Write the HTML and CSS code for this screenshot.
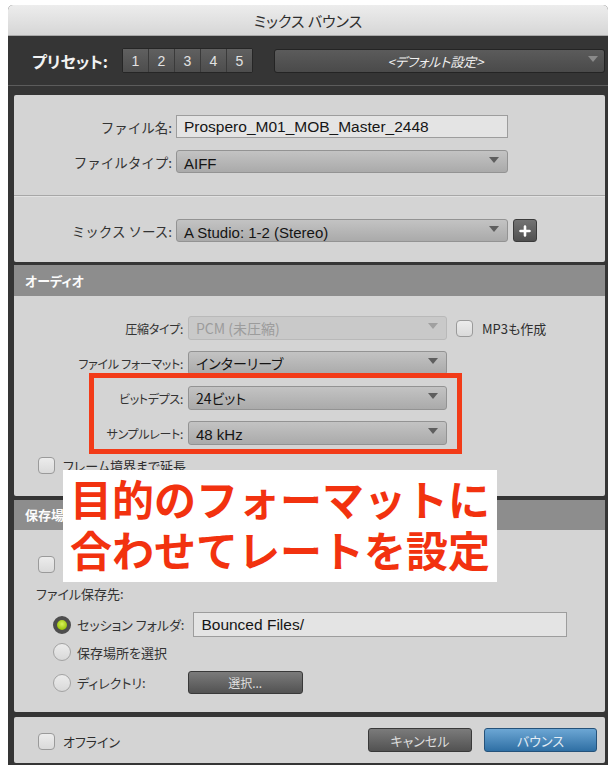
FILE: index.html
```html
<!DOCTYPE html>
<html lang="ja">
<head>
<meta charset="utf-8">
<title>ミックス バウンス</title>
<link rel="stylesheet" href="styles.css">
</head>
<body>
<div class="dialog">
  <div class="titlebar">ミックス バウンス</div>

  <div class="presets">
    <span class="presets-label">プリセット:</span>
    <div class="preset-slots">
      <span>1</span><span>2</span><span>3</span><span>4</span><span>5</span>
    </div>
    <div class="preset-select">&lt;デフォルト設定&gt;<span class="caret caret-dark"></span></div>
  </div>

  <div class="panel panel-file">
    <div class="form form-file">
      <span class="lbl">ファイル名:</span>
      <div class="field">Prospero_M01_MOB_Master_2448</div>
      <span></span>
      <span class="lbl">ファイルタイプ:</span>
      <div class="select">AIFF<span class="caret"></span></div>
      <span></span>
    </div>
    <div class="divider"></div>
    <div class="form form-file">
      <span class="lbl">ミックス ソース:</span>
      <div class="select">A Studio: 1-2 (Stereo)<span class="caret"></span></div>
      <button class="add-btn" type="button">
        <svg width="12" height="12" viewBox="0 0 12 12"><path d="M6 1.5v9M1.5 6h9" stroke="#fff" stroke-width="2.6" stroke-linecap="round"/></svg>
      </button>
    </div>
  </div>

  <section class="group group-audio">
    <div class="group-head">オーディオ</div>
    <div class="panel panel-audio">
      <div class="form form-audio">
        <span class="lbl">圧縮タイプ:</span>
        <div class="select select-off jp">PCM (未圧縮)<span class="caret"></span></div>
        <label class="check check-inline"><span class="box"></span><span class="check-text">MP3も作成</span></label>

        <span class="lbl">ファイル フォーマット:</span>
        <div class="select jp">インターリーブ<span class="caret"></span></div>
        <span></span>

        <span class="lbl">ビットデプス:</span>
        <div class="select jp">24ビット<span class="caret"></span></div>
        <span></span>

        <span class="lbl">サンプルレート:</span>
        <div class="select">48 kHz<span class="caret"></span></div>
        <span></span>
      </div>
      <label class="check check-row"><span class="box"></span><span class="check-text">フレーム境界まで延長</span></label>
    </div>
  </section>

  <section class="group group-save">
    <div class="group-head">保存場所</div>
    <div class="panel panel-save">
      <label class="check check-row check-first"><span class="box"></span><span class="check-text">バウンス後にインポート</span></label>
      <div class="dest-title">ファイル保存先:</div>
      <div class="radio-row radio-row-1">
        <span class="radio radio-on"></span>
        <span class="radio-text">セッション フォルダ:</span>
        <div class="field field-folder">Bounced Files/</div>
      </div>
      <div class="radio-row radio-row-2">
        <span class="radio"></span>
        <span class="radio-text">保存場所を選択</span>
      </div>
      <div class="radio-row radio-row-3">
        <span class="radio"></span>
        <span class="radio-text">ディレクトリ:</span>
        <button class="btn btn-choose" type="button">選択...</button>
      </div>
    </div>
  </section>

  <div class="panel panel-footer">
    <label class="check"><span class="box"></span><span class="check-text">オフライン</span></label>
    <div class="actions">
      <button class="btn btn-cancel" type="button">キャンセル</button>
      <button class="btn btn-bounce" type="button">バウンス</button>
    </div>
  </div>

  <div class="mark-box"></div>
  <div class="callout">目的のフォーマットに<br>合わせてレートを設定</div>
</div>
</body>
</html>
```

FILE: styles.css
```css
html, body {
  margin: 0;
  background: #ffffff;
}

body {
  font-family: "Noto Sans CJK JP", "Liberation Sans", sans-serif;
  font-feature-settings: "palt";
  color: #2c2c2c;
}

.dialog {
  position: relative;
  margin: 5px 0 0 8px;
  width: 600px;
  height: 760px;
  background: #353535;
  border-radius: 5px 5px 0 0;
  overflow: hidden;
}

/* title bar */
.titlebar {
  height: 31px;
  line-height: 31px;
  text-align: center;
  font-size: 15px;
  color: #2e2e2e;
  background: linear-gradient(#ededed, #d6d6d6);
  border-bottom: 1px solid #a9a9a9;
  box-sizing: border-box;
}

/* presets strip */
.presets {
  height: 50px;
  display: flex;
  align-items: center;
  padding-left: 24px;
  box-sizing: border-box;
  border-bottom: 1px solid #5c5c5c;
  margin-bottom: 9px;
}

.presets-label {
  color: #f2f2f2;
  font-weight: 700;
  font-size: 16px;
  width: 90px;
}

.preset-slots {
  display: flex;
  height: 25px;
  border: 1px solid #262626;
  border-radius: 2px;
  box-sizing: border-box;
  margin-right: 21px;
}

.preset-slots span {
  width: 25px;
  display: flex;
  align-items: center;
  justify-content: center;
  font-family: "Liberation Sans", sans-serif;
  font-size: 14px;
  color: #e2e2e2;
  background: linear-gradient(#606060, #4d4d4d);
  border-left: 1px solid #3a3a3a;
}

.preset-slots span:first-child {
  border-left: none;
}

.preset-select {
  position: relative;
  flex: 1;
  height: 24px;
  line-height: 23px;
  text-align: center;
  font-size: 13px;
  font-style: italic;
  color: #f0f0f0;
  background: linear-gradient(#5b5b5b, #4a4a4a);
  border: 1px solid #242424;
  border-radius: 3px;
  box-sizing: border-box;
  margin-right: 3px;
  padding-right: 8px;
}

/* light panels */
.panel {
  margin: 0 3px 0 6px;
  background: #d4d4d4;
  border-radius: 2px;
  box-sizing: border-box;
}

.panel-file {
  height: 167px;
  padding-top: 20px;
  margin-bottom: 3px;
}

.form {
  display: grid;
  align-items: center;
  column-gap: 4px;
  row-gap: 12px;
}

.form-file {
  grid-template-columns: 158px 332px auto;
}

.lbl {
  text-align: right;
  font-size: 13px;
  color: #333;
  white-space: nowrap;
}

.form-file .lbl {
  font-size: 13.5px;
  font-feature-settings: normal;
}

.field {
  height: 23px;
  line-height: 22px;
  padding-left: 7px;
  box-sizing: border-box;
  background: #e4e4e4;
  border: 1px solid #9d9d9d;
  font-family: "Liberation Sans", sans-serif;
  font-size: 15.5px;
  color: #161616;
}

.select {
  position: relative;
  height: 23px;
  line-height: 25px;
  padding-left: 7px;
  box-sizing: border-box;
  background: linear-gradient(#c3c3c3, #aaaaaa);
  border: 1px solid #939393;
  border-radius: 3px;
  font-family: "Liberation Sans", sans-serif;
  font-size: 15px;
  color: #141414;
  white-space: nowrap;
}

.select.jp {
  font-family: "Noto Sans CJK JP", "Liberation Sans", sans-serif;
  font-size: 14px;
  line-height: 23px;
}

.select-off {
  background: #c9c9c9;
  border-color: #b9b9b9;
  color: #9c9c9c;
}

.caret {
  position: absolute;
  right: 8px;
  top: 6px;
  width: 0;
  height: 0;
  border-left: 5px solid transparent;
  border-right: 5px solid transparent;
  border-top: 6px solid #5e5e5e;
}

.select-off .caret {
  border-top-color: #a0a0a0;
}

.caret-dark {
  top: 6px;
  right: 6px;
  border-top-color: #8a8a8a;
}

.divider {
  height: 1px;
  margin: 22px 0 23px;
  background: #a7a7a7;
  box-shadow: 0 1px 0 #e2e2e2;
}

.add-btn {
  margin-left: 1px;
  width: 24px;
  height: 23px;
  padding: 0;
  display: flex;
  align-items: center;
  justify-content: center;
  background: linear-gradient(#737373, #4f4f4f);
  border: 1px solid #3b3b3b;
  border-radius: 3px;
}

/* grouped sections with a grey header */
.group-head {
  margin: 0 3px 0 6px;
  height: 31px;
  line-height: 31px;
  padding-left: 11px;
  background: #8d8d8d;
  color: #fbfbfb;
  font-size: 13px;
  font-weight: 700;
}

.group-audio {
  margin-bottom: 4px;
}

.group-audio .panel {
  border-radius: 0 0 2px 2px;
  height: 200px;
  padding-top: 20px;
}

.form-audio {
  grid-template-columns: 169px 259px auto;
  column-gap: 5px;
  row-gap: 11px;
}

.form-audio .lbl {
  font-size: 12px;
  letter-spacing: -0.3px;
}

.form-audio .select {
  height: 24px;
}

.check {
  display: flex;
  align-items: center;
  font-size: 13px;
  color: #2e2e2e;
}

.box {
  width: 17px;
  height: 17px;
  box-sizing: border-box;
  border: 1px solid #9a9a9a;
  border-radius: 4px;
  background: linear-gradient(#ececec, #dadada);
  margin-right: 8px;
  flex: none;
}

.check-inline {
  margin-left: 4px;
}

.check-inline .box {
  margin-right: 9px;
}

.check-row {
  margin: 11px 0 0 24px;
}

/* destination section */
.group-save {
  margin-bottom: 5px;
}

.group-save .group-head {
  height: 30px;
  line-height: 30px;
}

.group-save .panel {
  border-radius: 0 0 2px 2px;
  height: 182px;
  padding-top: 25px;
}

.check-first {
  margin-top: 0;
}

.dest-title {
  margin: 11px 0 0 22px;
  font-size: 13px;
  line-height: 18px;
  color: #333;
}

.radio-row {
  display: flex;
  align-items: center;
  padding-left: 39px;
}

.radio-row-1 {
  height: 25px;
  margin-top: 9px;
}

.radio-row-2 {
  height: 20px;
  margin-top: 5px;
}

.radio-row-3 {
  height: 23px;
  margin-top: 9px;
}

.radio {
  width: 18px;
  height: 18px;
  box-sizing: border-box;
  border-radius: 50%;
  border: 1px solid #a3a3a3;
  background: linear-gradient(#ececec, #d9d9d9);
  margin-right: 6px;
  flex: none;
}

.radio-on {
  border: 4px solid #4d4d4d;
  background: radial-gradient(circle at 50% 40%, #d9f25a, #9cc40e 70%);
}

.radio-text {
  font-size: 13px;
  color: #333;
}

.field-folder {
  margin-left: 9px;
  width: 374px;
  height: 25px;
  line-height: 24px;
}

.btn {
  height: 24px;
  padding: 0;
  box-sizing: border-box;
  border-radius: 3px;
  font-family: "Noto Sans CJK JP", sans-serif;
  font-feature-settings: "palt";
  font-size: 13px;
  color: #dedede;
  background: linear-gradient(#7b7b7b, #525252);
  border: 1px solid #393939;
}

.btn-choose {
  margin-left: 42px;
  width: 115px;
  height: 23px;
  font-size: 12px;
}

/* footer */
.panel-footer {
  height: 46px;
  display: flex;
  align-items: center;
  justify-content: space-between;
  padding: 0 8px 0 24px;
}

.panel-footer .check {
  margin-top: 3px;
}

.actions {
  display: flex;
  gap: 12px;
}

.btn-cancel {
  width: 104px;
}

.btn-bounce {
  width: 113px;
  color: #e4edf5;
  background: linear-gradient(#6ca6d4, #2f6fa4);
  border-color: #25527a;
}

/* annotation drawn over the dialog */
.mark-box {
  position: absolute;
  left: 81px;
  top: 368px;
  width: 373px;
  height: 81px;
  box-sizing: border-box;
  border: 5px solid #f23b18;
}

.callout {
  position: absolute;
  left: 55px;
  top: 465px;
  width: 434px;
  height: 112px;
  box-sizing: border-box;
  padding: 2px 0 0 7px;
  background: #ffffff;
  color: #f2320f;
  font-size: 42px;
  font-weight: 700;
  line-height: 51px;
  font-feature-settings: normal;
  white-space: nowrap;
}
```
